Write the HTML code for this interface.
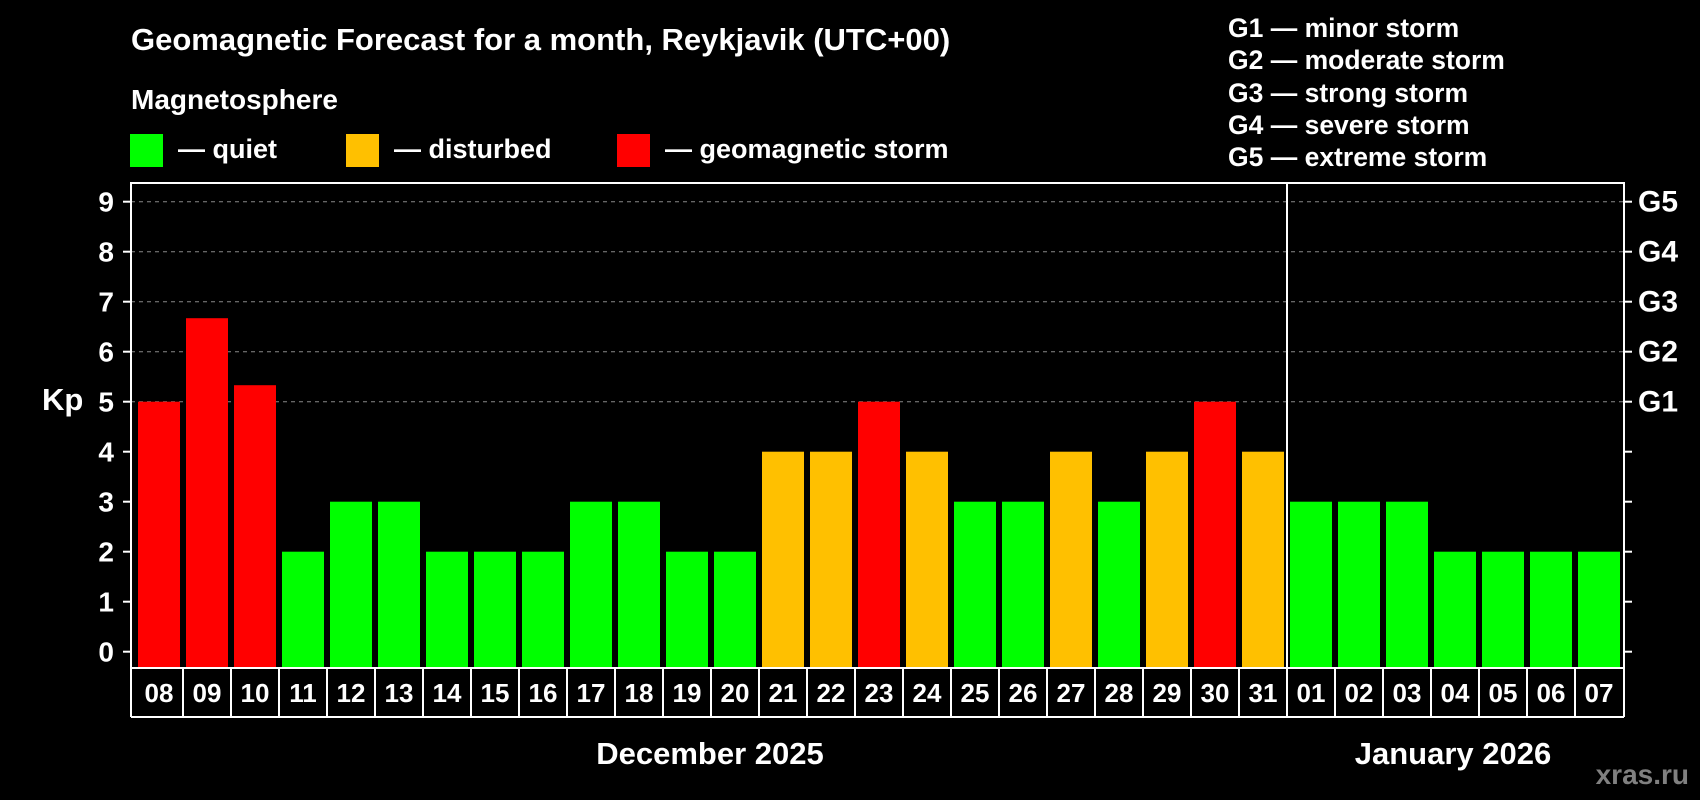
<!DOCTYPE html><html><head><style>body{margin:0;background:#000;width:1700px;height:800px;overflow:hidden}svg{display:block}text{font-family:"Liberation Sans",Arial,sans-serif;font-weight:bold;fill:#fff}</style></head><body>
<svg width="1700" height="800" viewBox="0 0 1700 800">
<text x="131" y="50" font-size="31">Geomagnetic Forecast for a month, Reykjavik (UTC+00)</text>
<text x="131" y="109" font-size="28">Magnetosphere</text>
<rect x="130" y="134" width="33" height="33" fill="#00ff00"/><text x="178" y="158" font-size="27">— quiet</text>
<rect x="346" y="134" width="33" height="33" fill="#ffc000"/><text x="394" y="158" font-size="27">— disturbed</text>
<rect x="617" y="134" width="33" height="33" fill="#ff0000"/><text x="665" y="158" font-size="27">— geomagnetic storm</text>
<g font-size="26.5"><text x="1228" y="37">G1 — minor storm</text><text x="1228" y="69">G2 — moderate storm</text><text x="1228" y="102">G3 — strong storm</text><text x="1228" y="134">G4 — severe storm</text><text x="1228" y="166">G5 — extreme storm</text></g>
<g stroke="#888" stroke-width="1" stroke-dasharray="4,4"><line x1="131" y1="201.7" x2="1624" y2="201.7"/><line x1="131" y1="251.7" x2="1624" y2="251.7"/><line x1="131" y1="301.7" x2="1624" y2="301.7"/><line x1="131" y1="351.7" x2="1624" y2="351.7"/><line x1="131" y1="401.7" x2="1624" y2="401.7"/></g>
<g id="bars"></g>
<g stroke="#fff" stroke-width="2" fill="none"><rect x="131" y="183" width="1493" height="485"/><line x1="1287" y1="183" x2="1287" y2="717"/><line x1="131" y1="717" x2="1624" y2="717"/><line x1="131" y1="668" x2="131" y2="717"/><line x1="1624" y1="668" x2="1624" y2="717"/></g>
<g id="rest"></g>
<text x="42" y="410" font-size="31">Kp</text>
<text x="710" y="764" font-size="31" text-anchor="middle">December 2025</text>
<text x="1453" y="764" font-size="31" text-anchor="middle">January 2026</text>
<text x="1689" y="784" font-size="28" text-anchor="end" style="fill:#808080">xras.ru</text>
</svg>
<script>
var v=[5,6.67,5.33,2,3,3,2,2,2,3,3,2,2,4,4,5,4,3,3,4,3,4,5,4,3,3,3,2,2,2,2];
var c="RRRGGGGGGGGGGOOROGGOGOROGGGGGGG";
var col={R:"#ff0000",G:"#00ff00",O:"#ffc000"};
var ns="http://www.w3.org/2000/svg",b=document.getElementById("bars"),r=document.getElementById("rest");
function el(p,t,a,tx){var e=document.createElementNS(ns,t);for(var k in a)e.setAttribute(k,a[k]);if(tx)e.textContent=tx;p.appendChild(e);return e}
for(var i=0;i<31;i++){var y=651.7-50*v[i];el(b,"rect",{x:138+48*i,y:y,width:42,height:668-y,fill:col[c[i]]});
var d=i<24?(8+i):(i-23);el(r,"text",{x:159+48*i,y:702,"font-size":26,"text-anchor":"middle"},(d<10?"0":"")+d);
if(i>0)el(r,"line",{x1:135+48*i,y1:668,x2:135+48*i,y2:717,stroke:"#fff","stroke-width":2});}
for(var k=0;k<=9;k++){var y=651.7-50*k;el(r,"line",{x1:123,y1:y,x2:131,y2:y,stroke:"#fff","stroke-width":2});el(r,"line",{x1:1624,y1:y,x2:1632,y2:y,stroke:"#fff","stroke-width":2});
el(r,"text",{x:114,y:y+10,"font-size":28,"text-anchor":"end"},""+k);if(k>=5)el(r,"text",{x:1638,y:y+10,"font-size":30},"G"+(k-4));}
</script></body></html>
